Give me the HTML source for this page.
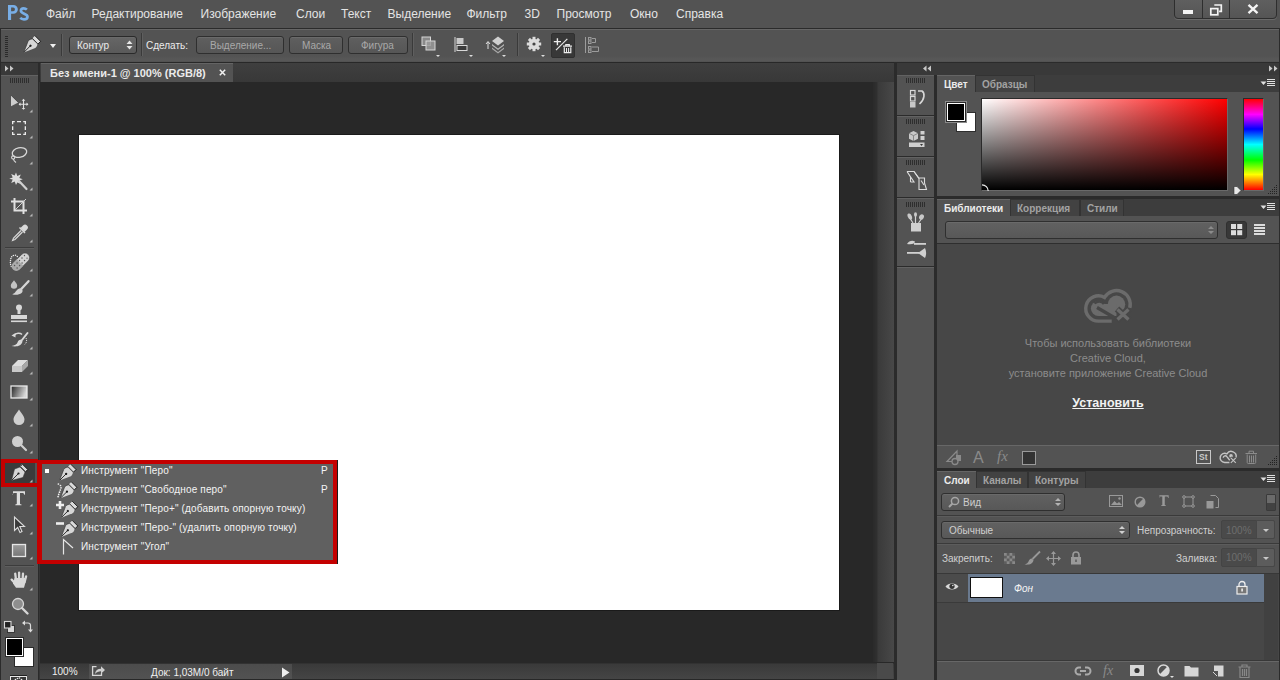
<!DOCTYPE html>
<html><head><meta charset="utf-8">
<style>
*{margin:0;padding:0;box-sizing:border-box}
html,body{width:1280px;height:680px;overflow:hidden;background:#535353;font-family:"Liberation Sans",sans-serif;}
body{position:relative}
.a{position:absolute}
.t{position:absolute;white-space:nowrap;line-height:1}
svg{position:absolute;overflow:visible}
.menu .t{font-size:12px;color:#e4e4e4;top:8px}
.tri{position:absolute;width:0;height:0;border-left:3px solid transparent;border-right:3px solid transparent;border-top:3px solid #e0e0e0}
.corner{position:absolute;width:0;height:0;border-left:3px solid transparent;border-bottom:3px solid #c8c8c8}
.grip{position:absolute;height:5px;background:repeating-linear-gradient(90deg,#2e2e2e 0 1px,transparent 1px 2px)}
.btn{position:absolute;border:1px solid #2f2f2f;border-radius:3px;background:linear-gradient(#5f5f5f,#565656);box-shadow:inset 0 1px 0 #6a6a6a}
</style></head>
<body>
<svg style="left:0;top:0" width="0" height="0"><defs>
<g id="penico">
 <path d="M-4 0.3h8v3.6h-8z" fill="#dadada"/>
 <path d="M-4.2 0.2h8.4 M4.2 0v4" stroke="#1e1e1e" stroke-width="0.9"/>
 <path d="M-3.9 4.1h7.8" stroke="#2a2a2a" stroke-width="0.8"/>
 <path d="M-3.8 4.6h7.6C5 6 5.4 7.5 5.2 9L0.3 20h-0.6L-5.2 9C-5.4 7.5-5 6-3.8 4.6z" fill="#d6d6d6"/>
 <path d="M-3.8 4.6C-5 6-5.4 7.5-5.2 9L-0.3 20" stroke="#2c2c2c" stroke-width="0.6" fill="none"/>
 <path d="M0 11V20" stroke="#1e1e1e" stroke-width="0.9"/>
 <circle cx="0" cy="10.8" r="1.2" fill="#1e1e1e"/>
</g>
</defs></svg>
<!-- MENU BAR -->
<div class="a menu" style="left:0;top:0;width:1280px;height:28px;background:#535353">
  <svg style="left:0;top:0" width="40" height="28" viewBox="0 0 40 28">
  <path d="M8 4.9H13.4A4.45 4.45 0 0 1 13.4 13.8H11.1V20H8Z M11.1 7.5H13.1A1.85 1.85 0 0 1 13.1 11.2H11.1Z" fill="#78aee6" fill-rule="evenodd"/>
  <path d="M26.9 9.6C26 8.7 24.8 8.3 23.7 8.3 21.8 8.3 20.9 9.4 20.9 10.8c0 3.3 6.6 2.6 6.6 5.9 0 1.8-1.6 2.6-3.6 2.6-1.5 0-2.8-0.5-3.7-1.4" stroke="#78aee6" stroke-width="2.7" fill="none"/>
</svg>
  <div class="t" style="left:46px">Файл</div>
  <div class="t" style="left:91.5px">Редактирование</div>
  <div class="t" style="left:200.5px">Изображение</div>
  <div class="t" style="left:296px">Слои</div>
  <div class="t" style="left:341px">Текст</div>
  <div class="t" style="left:387.5px">Выделение</div>
  <div class="t" style="left:466.5px">Фильтр</div>
  <div class="t" style="left:524.5px">3D</div>
  <div class="t" style="left:556.5px">Просмотр</div>
  <div class="t" style="left:630px">Окно</div>
  <div class="t" style="left:676px">Справка</div>
</div>

<!-- OPTIONS BAR -->
<div class="a" style="left:0;top:28px;width:1280px;height:35px;background:#2b2b2b"></div>
<div class="a" style="left:1px;top:29px;width:1278px;height:33px;background:linear-gradient(#535353 0,#535353 26px,#575757 29px,#575757 31px,#4e4e4e 32px);border-top:1px solid #666"></div>
<div class="grip" style="left:5px;top:36px;width:3px;height:21px;background:repeating-linear-gradient(180deg,#2a2a2a 0 1px,transparent 1px 2px)"></div>
<!-- pen icon -->
<svg style="left:0;top:0" width="1280" height="680" viewBox="0 0 1280 680">
 <use href="#penico" transform="translate(37.9 38.35) rotate(45) scale(0.97)"/>
</svg>
<div class="tri" style="left:50px;top:44px;border-width:4px 3px 0 3px;border-top-color:#f0f0f0"></div>
<div class="a" style="left:61px;top:34px;width:1px;height:22px;background:#3a3a3a;box-shadow:1px 0 0 #5f5f5f"></div>
<div class="btn" style="left:69px;top:36px;width:68px;height:18px;background:linear-gradient(#666,#5a5a5a);border-color:#2a2a2a"></div>
<div class="t" style="left:77px;top:41px;font-size:10px;color:#ececec">Контур</div>
<svg style="left:126px;top:39px" width="7" height="12" viewBox="0 0 7 12"><path d="M0.5 5L3.5 1.5 6.5 5z M0.5 7L3.5 10.5 6.5 7z" fill="#e6e6e6"/></svg>
<div class="a" style="left:141px;top:33px;width:1px;height:23px;background:#3a3a3a;box-shadow:1px 0 0 #5f5f5f"></div>
<div class="t" style="left:146px;top:41px;font-size:10px;color:#ececec">Сделать:</div>
<div class="btn" style="left:196px;top:36px;width:88px;height:18px"></div>
<div class="t" style="left:210px;top:41px;font-size:10px;color:#a9a9a9">Выделение...</div>
<div class="btn" style="left:289px;top:36px;width:54px;height:18px"></div>
<div class="t" style="left:302px;top:41px;font-size:10px;color:#a9a9a9">Маска</div>
<div class="btn" style="left:348px;top:36px;width:60px;height:18px"></div>
<div class="t" style="left:361px;top:41px;font-size:10px;color:#a9a9a9">Фигура</div>
<div class="a" style="left:412px;top:33px;width:1px;height:23px;background:#3a3a3a;box-shadow:1px 0 0 #5f5f5f"></div>
<!-- path ops -->
<svg style="left:421px;top:36px" width="16" height="16" viewBox="0 0 16 16">
  <rect x="1" y="1" width="8.5" height="8.5" fill="#8a8a8a" stroke="#d6d6d6" stroke-width="1"/>
  <rect x="5" y="5" width="9" height="9" fill="#9a9a9a" fill-opacity="0.85" stroke="#d6d6d6" stroke-width="1"/>
</svg>
<div class="tri" style="left:436px;top:55px;border-width:2px 2px 0 2px;border-top-color:#ddd"></div>
<!-- align -->
<svg style="left:454px;top:36px" width="16" height="17" viewBox="0 0 16 17">
  <rect x="0.5" y="1" width="1" height="15" fill="#d8d8d8"/>
  <rect x="2.5" y="2" width="7" height="6" fill="#c8c8c8"/>
  <rect x="3" y="9.5" width="10" height="5" fill="#3a3a3a" stroke="#d8d8d8" stroke-width="1"/>
</svg>
<div class="tri" style="left:469px;top:55px;border-width:2px 2px 0 2px;border-top-color:#ddd"></div>
<!-- arrange -->
<svg style="left:485px;top:36px" width="20" height="18" viewBox="0 0 20 18">
  <path d="M3 13V6 M1 8L3 5.5 5 8" stroke="#e0e0e0" stroke-width="1" fill="none"/>
  <path d="M13 0.5L19 5 13 9.5 7 5z" fill="#d0d0d0"/>
  <path d="M7 8l6 4.5 6-4.5 0 1.5-6 4.5-6-4.5z" fill="#b8b8b8"/>
  <path d="M7 11.5l6 4.5 6-4.5 0 1.5-6 4.5-6-4.5z" fill="#a8a8a8"/>
</svg>
<div class="tri" style="left:502px;top:55px;border-width:2px 2px 0 2px;border-top-color:#ddd"></div>
<div class="a" style="left:517px;top:33px;width:1px;height:23px;background:#3a3a3a;box-shadow:1px 0 0 #5f5f5f"></div>
<!-- gear -->
<svg style="left:526px;top:36px" width="16" height="16" viewBox="0 0 16 16">
  <g fill="#dcdcdc">
  <circle cx="8" cy="8" r="5.2"/>
  <rect x="6.5" y="0.8" width="3" height="14.4"/>
  <rect x="0.8" y="6.5" width="14.4" height="3"/>
  <rect x="6.5" y="0.8" width="3" height="14.4" transform="rotate(45 8 8)"/>
  <rect x="6.5" y="0.8" width="3" height="14.4" transform="rotate(-45 8 8)"/>
  </g>
  <circle cx="8" cy="8" r="1.6" fill="#444"/>
</svg>
<div class="tri" style="left:541px;top:55px;border-width:2px 2px 0 2px;border-top-color:#ddd"></div>
<div class="a" style="left:551px;top:33px;width:24px;height:25px;background:#383838;border-radius:2px;border:1px solid #303030"></div>
<svg style="left:550px;top:34px" width="26" height="22" viewBox="550 34 26 22">
  <path d="M553.8 41.6h7.2 M557.4 38.2v7" stroke="#ececec" stroke-width="1.4"/>
  <path d="M556 50.2L567.3 38.8" stroke="#e4e4e4" stroke-width="1.2"/>
  <path d="M563 46.2h9 M565.8 46v-1.4h3.5V46 M564.3 47.2v5.4h6.5v-5.4" stroke="#ececec" stroke-width="1.2" fill="none"/>
  <path d="M566.5 48v4 M568.6 48v4" stroke="#ececec" stroke-width="1"/>
</svg>
<svg style="left:582px;top:34px" width="20" height="22" viewBox="582 34 20 22">
  <g stroke="#9c9c9c" stroke-width="1" fill="none">
  <path d="M585.5 37v16"/>
  <rect x="588.5" y="37.5" width="2.5" height="2.5"/><rect x="588.5" y="41" width="2.5" height="2.5"/>
  <rect x="588.5" y="46.5" width="2.5" height="2.5"/><rect x="588.5" y="50" width="2.5" height="2.5"/>
  <path d="M592 38.5h3.5v4H592 M592 47h6.5v4.5H592"/>
  </g>
</svg>
<!-- window controls -->
<div class="a" style="left:1174px;top:-3px;width:103px;height:22px;border:1px solid #2e2e2e;border-radius:0 0 4px 4px;background:linear-gradient(#606060,#555);box-shadow:0 1px 0 #6a6a6a"></div>
<div class="a" style="left:1202px;top:0;width:1px;height:18px;background:#2e2e2e"></div>
<div class="a" style="left:1229px;top:0;width:1px;height:18px;background:#2e2e2e"></div>
<div class="a" style="left:1183px;top:10px;width:10px;height:4px;background:#f4f4f4"></div>
<svg style="left:1209px;top:4px" width="14" height="12" viewBox="0 0 14 12">
  <path d="M5.3 1h7v6.3h-2.2" stroke="#f4f4f4" stroke-width="1.7" fill="none"/>
  <rect x="1.8" y="4.6" width="7" height="6.2" stroke="#f4f4f4" stroke-width="1.7" fill="none"/>
</svg>
<svg style="left:1247px;top:4px" width="12" height="10" viewBox="0 0 12 10">
  <path d="M1.5 0.8L10.5 9.2 M10.5 0.8L1.5 9.2" stroke="#f4f4f4" stroke-width="2.3"/>
</svg>

<!-- LEFT STRIP + TOOLBAR -->
<div class="a" style="left:0;top:62px;width:40px;height:618px;background:#2b2b2b"></div>
<div class="a" style="left:1px;top:63px;width:37px;height:12px;background:#393939"></div>
<svg style="left:5px;top:65px" width="10" height="7" viewBox="0 0 10 7"><path d="M0 0.5L3.5 3.5 0 6.5z M5 0.5L8.5 3.5 5 6.5z" fill="#c8c8c8"/></svg>
<div class="a" style="left:1px;top:75px;width:37px;height:605px;background:#535353;border-top:1px solid #626262"></div>
<div class="grip" style="left:10px;top:78px;width:19px"></div>
<!-- DOCUMENT AREA -->
<div class="a" style="left:39px;top:82px;width:1px;height:598px;background:#363636"></div>
<div class="a" style="left:40px;top:62px;width:854px;height:618px;background:#282828"></div>
<div class="a" style="left:40px;top:63px;width:854px;height:19px;background:linear-gradient(#3f3f3f,#383838)"></div>
<div class="a" style="left:41px;top:63px;width:192px;height:19px;background:#535353;border-top:1px solid #646464"></div>
<div class="t" style="left:50px;top:68px;font-size:11px;font-weight:bold;color:#ebebeb">Без имени-1 @ 100% (RGB/8)</div>
<svg style="left:219px;top:69px" width="7" height="7" viewBox="0 0 7 7"><path d="M0.8 0.8L6.2 6.2 M6.2 0.8L0.8 6.2" stroke="#f0f0f0" stroke-width="1.5"/></svg>
<div class="a" style="left:873px;top:82px;width:21px;height:580px;background:linear-gradient(90deg,#2a2a2a 0,#303030 4px,#3a3a3a 5px,#484848 100%)"></div>
<div class="a" style="left:78px;top:134px;width:762px;height:477px;background:#fff;border:1px solid #1a1a1a"></div>
<!-- status bar -->
<div class="a" style="left:40px;top:663px;width:854px;height:16px;background:linear-gradient(#3a3a3a,#454545);border-top:1px solid #323232"></div>
<div class="t" style="left:52px;top:667px;font-size:10px;color:#f0f0f0">100%</div>
<div class="a" style="left:89px;top:664px;width:203px;height:15px;background:linear-gradient(#4c4c4c,#525252)"></div>
<svg style="left:91px;top:665px" width="15" height="12" viewBox="0 0 15 12">
  <path d="M5.5 1.6H1.6V10.4H10.5V8" stroke="#d6d6d6" stroke-width="1.3" fill="none"/>
  <path d="M4 9c0.3-3.5 2.6-5.2 6-5.2V1.2l4 3.8-4 3.8V6.3C7.6 6.3 5.6 7.2 4 9z" fill="#cfcfcf"/>
</svg>
<div class="t" style="left:151px;top:667.5px;font-size:10px;color:#f0f0f0">Док: 1,03M/0 байт</div>
<div class="a" style="left:877px;top:663px;width:16px;height:16px;background:#4a4a4a"></div>
<svg style="left:281px;top:667px" width="9" height="11" viewBox="0 0 9 11"><path d="M1 0.5L8.5 5.5 1 10.5z" fill="#eee"/></svg>
<!-- RIGHT DOCK -->
<div class="a" style="left:894px;top:62px;width:386px;height:618px;background:#2b2b2b"></div>
<div class="a" style="left:897px;top:63px;width:382px;height:12px;background:#393939"></div>
<svg style="left:923px;top:65px" width="8" height="7" viewBox="0 0 8 7"><path d="M3.5 0.5L0 3.5 3.5 6.5z M8 0.5L4.5 3.5 8 6.5z" fill="#c8c8c8"/></svg>
<svg style="left:1269px;top:65px" width="10" height="7" viewBox="0 0 10 7"><path d="M0 0.5L3.5 3.5 0 6.5z M5 0.5L8.5 3.5 5 6.5z" fill="#c8c8c8"/></svg>
<div class="a" style="left:897px;top:75px;width:37px;height:40px;background:#535353;border-top:1px solid #626262"></div>
<div class="a" style="left:897px;top:116px;width:37px;height:40px;background:#535353;border-top:1px solid #626262"></div>
<div class="a" style="left:897px;top:157px;width:37px;height:40px;background:#535353;border-top:1px solid #626262"></div>
<div class="a" style="left:897px;top:198px;width:37px;height:68px;background:#535353;border-top:1px solid #626262"></div>
<div class="a" style="left:897px;top:267px;width:37px;height:413px;background:#535353;border-top:1px solid #626262"></div>
<div class="grip" style="left:906px;top:78px;width:19px"></div>
<div class="grip" style="left:906px;top:119px;width:19px"></div>
<div class="grip" style="left:906px;top:160px;width:19px"></div>
<div class="grip" style="left:906px;top:202px;width:19px"></div>
<!-- COLOR PANEL -->
<div class="a" style="left:937px;top:75px;width:342px;height:121px;background:#535353"></div>
<div class="a" style="left:937px;top:75px;width:342px;height:17px;background:#3d3d3d"></div>
<div class="a" style="left:937px;top:75px;width:38px;height:17px;background:#535353;border-top:1px solid #656565"></div>
<div class="a" style="left:975px;top:75px;width:60px;height:17px;background:#424242;border:1px solid #333;border-bottom:none"></div>
<div class="t" style="left:944px;top:80px;font-size:10px;font-weight:bold;color:#ececec">Цвет</div>
<div class="t" style="left:982px;top:80px;font-size:10px;font-weight:bold;color:#a2a2a2">Образцы</div>
<!-- LIBRARIES PANEL -->
<div class="a" style="left:937px;top:199px;width:342px;height:269px;background:#535353"></div>
<div class="a" style="left:937px;top:199px;width:342px;height:17px;background:#3d3d3d"></div>
<div class="a" style="left:937px;top:199px;width:73px;height:17px;background:#535353;border-top:1px solid #656565"></div>
<div class="a" style="left:1010px;top:199px;width:70px;height:17px;background:#424242;border:1px solid #333;border-bottom:none"></div>
<div class="a" style="left:1080px;top:199px;width:44px;height:17px;background:#424242;border:1px solid #333;border-bottom:none"></div>
<div class="t" style="left:944px;top:204px;font-size:10px;font-weight:bold;color:#ececec">Библиотеки</div>
<div class="t" style="left:1017px;top:204px;font-size:10px;font-weight:bold;color:#a2a2a2">Коррекция</div>
<div class="t" style="left:1087px;top:204px;font-size:10px;font-weight:bold;color:#a2a2a2">Стили</div>
<div class="a" style="left:937px;top:243px;width:342px;height:202px;background:#474747;border-top:1px solid #2e2e2e"></div>
<!-- LAYERS PANEL -->
<div class="a" style="left:937px;top:471px;width:342px;height:209px;background:#535353"></div>
<div class="a" style="left:937px;top:471px;width:342px;height:17px;background:#3d3d3d"></div>
<div class="a" style="left:937px;top:471px;width:39px;height:17px;background:#535353;border-top:1px solid #656565"></div>
<div class="a" style="left:976px;top:471px;width:52px;height:17px;background:#424242;border:1px solid #333;border-bottom:none"></div>
<div class="a" style="left:1028px;top:471px;width:58px;height:17px;background:#424242;border:1px solid #333;border-bottom:none"></div>
<div class="t" style="left:944px;top:476px;font-size:10px;font-weight:bold;color:#ececec">Слои</div>
<div class="t" style="left:983px;top:476px;font-size:10px;font-weight:bold;color:#a2a2a2">Каналы</div>
<div class="t" style="left:1035px;top:476px;font-size:10px;font-weight:bold;color:#a2a2a2">Контуры</div>

<!-- color panel content -->
<svg style="left:1260px;top:203px" width="16" height="9" viewBox="0 0 16 9"><path d="M0.5 2.5h6L3.5 6z" fill="#e0e0e0"/><path d="M7 0.5h8 M7 2.5h8 M7 4.5h8 M7 6.5h8" stroke="#e0e0e0" stroke-width="1"/></svg>
<svg style="left:1260px;top:79px" width="16" height="9" viewBox="0 0 16 9"><path d="M0.5 2.5h6L3.5 6z" fill="#e0e0e0"/><path d="M7 0.5h8 M7 2.5h8 M7 4.5h8 M7 6.5h8" stroke="#e0e0e0" stroke-width="1"/></svg>
<svg style="left:1260px;top:475px" width="16" height="9" viewBox="0 0 16 9"><path d="M0.5 2.5h6L3.5 6z" fill="#e0e0e0"/><path d="M7 0.5h8 M7 2.5h8 M7 4.5h8 M7 6.5h8" stroke="#e0e0e0" stroke-width="1"/></svg>
<div class="a" style="left:956px;top:112px;width:20px;height:20px;background:#fff;border:1px solid #2e2e2e"></div>
<div class="a" style="left:945px;top:101px;width:22px;height:22px;background:#000;border:1px solid #8a8a8a;box-shadow:inset 0 0 0 1px #2a2a2a,inset 0 0 0 2px #fff"></div>
<div class="a" style="left:981px;top:98px;width:247px;height:93px;border:1px solid #6a6a6a;border-top-color:#2a2a2a;border-left-color:#2a2a2a;background:linear-gradient(to bottom,rgba(0,0,0,0),#000),linear-gradient(to right,#fff,#f00)"></div>
<svg style="left:982px;top:184px" width="8" height="8" viewBox="0 0 8 8"><path d="M0 0.8a6.2 6.2 0 0 1 6.2 6.2" stroke="#eee" stroke-width="1.2" fill="none"/></svg>
<div class="a" style="left:1243px;top:98px;width:21px;height:93px;border:1px solid #6a6a6a;border-top-color:#2a2a2a;border-left-color:#2a2a2a;background:linear-gradient(to bottom,#f00 0%,#f0f 17%,#00f 33%,#0ff 50%,#0f0 67%,#ff0 83%,#f00 100%)"></div>
<svg style="left:1233px;top:186px" width="9" height="9" viewBox="0 0 9 9"><path d="M1 0.5h3l4 4 -4 4H1z" fill="#e8e8e8" stroke="#333" stroke-width="0.6"/></svg>
<svg style="left:1267px;top:184px" width="11" height="11" viewBox="0 0 11 11"><g fill="#222"><rect x="9" y="1" width="1" height="1"/><rect x="7" y="3" width="1" height="1"/><rect x="9" y="3" width="1" height="1"/><rect x="5" y="5" width="1" height="1"/><rect x="7" y="5" width="1" height="1"/><rect x="9" y="5" width="1" height="1"/><rect x="3" y="7" width="1" height="1"/><rect x="5" y="7" width="1" height="1"/><rect x="7" y="7" width="1" height="1"/><rect x="9" y="7" width="1" height="1"/><rect x="1" y="9" width="1" height="1"/><rect x="3" y="9" width="1" height="1"/><rect x="5" y="9" width="1" height="1"/><rect x="7" y="9" width="1" height="1"/><rect x="9" y="9" width="1" height="1"/></g></svg>
<!-- libraries content -->
<div class="btn" style="left:945px;top:221px;width:273px;height:18px;background:linear-gradient(#616161,#585858)"></div>
<svg style="left:1207px;top:224px" width="8" height="12" viewBox="0 0 8 12"><path d="M1 5L4 2 7 5z M1 7L4 10 7 7z" fill="#8c8c8c"/></svg>
<div class="a" style="left:1226px;top:221px;width:21px;height:18px;background:#383838;border-radius:3px;border:1px solid #303030"></div>
<svg style="left:1231px;top:224px" width="12" height="12" viewBox="0 0 12 12"><g fill="#dcdcdc"><rect x="0" y="0" width="5" height="5"/><rect x="6.2" y="0" width="5" height="5"/><rect x="0" y="6.2" width="5" height="5"/><rect x="6.2" y="6.2" width="5" height="5"/></g></svg>
<svg style="left:1254px;top:224px" width="12" height="12" viewBox="0 0 12 12"><g fill="#dcdcdc"><rect x="0" y="0" width="11" height="2"/><rect x="0" y="3" width="11" height="2"/><rect x="0" y="6" width="11" height="2"/><rect x="0" y="9" width="11" height="2"/></g></svg>
<svg style="left:1084px;top:288px" width="50" height="37" viewBox="0 0 50 37">
 <path d="M27.7 33.1H14.5A12.65 12.65 0 1 1 20.56 9.4A13.8 13.8 0 0 1 45.8 19.9" fill="none" stroke="#6b6b6b" stroke-width="3.4"/>
 <circle cx="14.5" cy="20.5" r="7.6" fill="#6b6b6b"/>
 <circle cx="32.5" cy="16.3" r="8.7" fill="#6b6b6b"/>
 <rect x="14.5" y="16" width="18" height="12" fill="#6b6b6b"/>
 <path d="M13 19.5L31 30" stroke="#474747" stroke-width="3.2"/>
 <path d="M10.5 15.5a6 6 0 0 1 9.5 0.5" stroke="#474747" stroke-width="2.6" fill="none"/>
 <path d="M33 21l12 11 M45 21l-12 11" stroke="#474747" stroke-width="6.5"/>
 <path d="M33.5 21.5l11 10 M44.5 21.5l-11 10" stroke="#6b6b6b" stroke-width="3.3"/>
</svg>
<div class="t" style="left:937px;top:338px;width:342px;text-align:center;font-size:11px;color:#8c8c8c">Чтобы использовать библиотеки</div>
<div class="t" style="left:937px;top:353px;width:342px;text-align:center;font-size:11px;color:#8c8c8c">Creative Cloud,</div>
<div class="t" style="left:937px;top:368px;width:342px;text-align:center;font-size:11px;color:#8c8c8c">установите приложение Creative Cloud</div>
<div class="t" style="left:937px;top:397px;width:342px;text-align:center;font-size:12.5px;font-weight:bold;color:#f2f2f2;text-decoration:underline">Установить</div>
<!-- libraries footer -->
<div class="a" style="left:937px;top:445px;width:342px;height:23px;background:#535353;border-top:1px solid #676767"></div>

<!-- libraries footer icons -->
<svg style="left:946px;top:449px" width="18" height="16" viewBox="0 0 18 16">
  <path d="M1 12.5L11 2v10.5z" stroke="#8a8a8a" stroke-width="1.2" fill="none"/>
  <rect x="10" y="6" width="5" height="6" fill="#8a8a8a"/>
  <circle cx="9" cy="12.5" r="3" fill="#535353" stroke="#8a8a8a" stroke-width="1.3"/>
</svg>
<div class="t" style="left:973px;top:450px;font-size:16px;color:#8a8a8a">A</div>
<div class="t" style="left:997px;top:449px;font-size:15px;font-style:italic;color:#8a8a8a;font-family:'Liberation Serif',serif">fx</div>
<div class="a" style="left:1022px;top:451px;width:14px;height:14px;background:#333;border:1px solid #9a9a9a"></div>
<div class="a" style="left:1196px;top:450px;width:15px;height:14px;border:1px solid #c8c8c8"></div>
<div class="t" style="left:1199px;top:453px;font-size:8.5px;font-weight:bold;color:#c8c8c8">St</div>
<svg style="left:1180px;top:440px" width="100" height="30" viewBox="1180 440 100 30">
 <g transform="translate(1219.5 450.5) scale(0.36)">
  <path d="M27.7 33.1H14.5A12.65 12.65 0 1 1 20.56 9.4A13.8 13.8 0 0 1 45.8 19.9" fill="none" stroke="#c4c4c4" stroke-width="4"/>
  <path d="M10.5 20a5.5 5.5 0 0 1 10-3l8 10" stroke="#c4c4c4" stroke-width="4" fill="none"/>
  <circle cx="32" cy="15" r="5" fill="#c4c4c4"/>
 </g>
 <path d="M1230.5 457.5l5.5 5.5 M1236 457.5l-5.5 5.5" stroke="#535353" stroke-width="3"/>
 <path d="M1230.8 457.8l5 5 M1235.8 457.8l-5 5" stroke="#c4c4c4" stroke-width="1.1"/>
 <g stroke="#8c8c8c" stroke-width="1" fill="none">
  <path d="M1245.5 453.5h11.5 M1249 453V451.2h4.5V453 M1247.2 454.5v8c0 0.6 0.4 1 1 1h6.5c0.6 0 1-0.4 1-1v-8 M1249.5 455.5v7 M1251.5 455.5v7 M1253.5 455.5v7"/>
 </g>
</svg>
<svg style="left:1267px;top:455px" width="11" height="11" viewBox="0 0 11 11"><g fill="#222"><rect x="9" y="1" width="1" height="1"/><rect x="7" y="3" width="1" height="1"/><rect x="9" y="3" width="1" height="1"/><rect x="5" y="5" width="1" height="1"/><rect x="7" y="5" width="1" height="1"/><rect x="9" y="5" width="1" height="1"/><rect x="3" y="7" width="1" height="1"/><rect x="5" y="7" width="1" height="1"/><rect x="7" y="7" width="1" height="1"/><rect x="9" y="7" width="1" height="1"/><rect x="1" y="9" width="1" height="1"/><rect x="3" y="9" width="1" height="1"/><rect x="5" y="9" width="1" height="1"/><rect x="7" y="9" width="1" height="1"/><rect x="9" y="9" width="1" height="1"/></g></svg>
<!-- layers content -->
<div class="btn" style="left:941px;top:493px;width:124px;height:18px;background:linear-gradient(#616161,#585858)"></div>
<svg style="left:948px;top:496px" width="12" height="12" viewBox="0 0 12 12"><circle cx="7" cy="5" r="3.6" stroke="#a6a6a6" stroke-width="1.5" fill="none"/><path d="M4.5 7.5L1 11" stroke="#a6a6a6" stroke-width="2"/></svg>
<div class="t" style="left:963px;top:498px;font-size:10px;color:#cdcdcd">Вид</div>
<svg style="left:1054px;top:496px" width="8" height="12" viewBox="0 0 8 12"><path d="M1 5L4 2 7 5z M1 7L4 10 7 7z" fill="#b4b4b4"/></svg>
<svg style="left:1109px;top:495px" width="15" height="13" viewBox="0 0 15 13"><rect x="0.5" y="0.5" width="13" height="11" stroke="#999" stroke-width="1" fill="none"/><path d="M2 10l3.5-4 2.5 2.5 2-1.5 3 3z" fill="#999"/><circle cx="10.5" cy="3.5" r="1.2" fill="#999"/></svg>
<svg style="left:1134px;top:496px" width="12" height="12" viewBox="0 0 12 12"><circle cx="6" cy="6" r="4.8" stroke="#999" stroke-width="1.4" fill="#535353"/><path d="M9.4 2.6A4.8 4.8 0 0 1 2.6 9.4z" fill="#999"/></svg>
<svg style="left:1158px;top:495px" width="12" height="11" viewBox="13 491 12 14.2"><path d="M13 491.2h12v3.6h-0.7c-0.3-1.4-0.8-1.9-2-1.9h-2.3v10.6c0 0.6 0.3 0.8 1.5 0.9v0.9h-6.2v-0.9c1.2-0.1 1.5-0.3 1.5-0.9V492.9h-2.3c-1.2 0-1.7 0.5-2 1.9H13z" fill="#9a9a9a"/></svg>
<svg style="left:1182px;top:495px" width="13" height="13" viewBox="0 0 13 13"><rect x="2" y="2" width="9" height="9" stroke="#999" stroke-width="1" fill="none"/><g fill="#535353" stroke="#999" stroke-width="1"><circle cx="2" cy="2" r="1.3"/><circle cx="11" cy="2" r="1.3"/><circle cx="2" cy="11" r="1.3"/><circle cx="11" cy="11" r="1.3"/></g></svg>
<svg style="left:1206px;top:495px" width="13" height="14" viewBox="0 0 13 14"><path d="M4.5 0.5h5l3 3v9h-3" stroke="#999" stroke-width="1" fill="none"/><rect x="0.5" y="6" width="7" height="7.5" fill="#999"/></svg>
<div class="a" style="left:1266px;top:494px;width:10px;height:17px;background:linear-gradient(#6a6a6a 0 50%,#424242 50%);border:1px solid #3a3a3a;border-radius:1px"></div>
<div class="a" style="left:937px;top:515px;width:342px;height:1px;background:#3a3a3a;box-shadow:0 1px 0 #5c5c5c"></div>
<div class="btn" style="left:941px;top:521px;width:189px;height:18px;background:linear-gradient(#616161,#585858)"></div>
<div class="t" style="left:949px;top:526px;font-size:10px;color:#d0d0d0">Обычные</div>
<svg style="left:1118px;top:524px" width="8" height="12" viewBox="0 0 8 12"><path d="M1 5L4 2 7 5z M1 7L4 10 7 7z" fill="#d0d0d0"/></svg>
<div class="t" style="left:1137px;top:526px;font-size:10px;color:#d0d0d0">Непрозрачность:</div>
<div class="a" style="left:1221px;top:520px;width:54px;height:19px;background:#4a4a4a;border:1px solid #444;border-radius:2px"></div>
<div class="a" style="left:1256px;top:520px;width:19px;height:19px;background:#5c5c5c;border-radius:0 2px 2px 0;border:1px solid #474747"></div>
<div class="t" style="left:1226px;top:526px;font-size:10px;color:#6e6e6e">100%</div>
<div class="tri" style="left:1263px;top:529px;border-width:3px 3px 0 3px;border-top-color:#c8c8c8"></div>
<div class="a" style="left:937px;top:543px;width:342px;height:1px;background:#3a3a3a;box-shadow:0 1px 0 #5c5c5c"></div>
<div class="t" style="left:942px;top:554px;font-size:10px;color:#d0d0d0">Закрепить:</div>
<svg style="left:1004px;top:553px" width="11" height="11" viewBox="0 0 11 11"><rect x="0" y="0" width="11" height="11" fill="#888"/><g fill="#5e5e5e"><rect x="2.75" y="0" width="2.75" height="2.75"/><rect x="8.25" y="0" width="2.75" height="2.75"/><rect x="0" y="2.75" width="2.75" height="2.75"/><rect x="5.5" y="2.75" width="2.75" height="2.75"/><rect x="2.75" y="5.5" width="2.75" height="2.75"/><rect x="8.25" y="5.5" width="2.75" height="2.75"/><rect x="0" y="8.25" width="2.75" height="2.75"/><rect x="5.5" y="8.25" width="2.75" height="2.75"/></g></svg>
<svg style="left:1024px;top:551px" width="17" height="14" viewBox="0 0 17 14"><path d="M16 0.5L8.5 8" stroke="#999" stroke-width="1.8"/><path d="M8 7.5c-2 0-3 1.5-3.5 3S2 13 0.5 13.5C4 14 9 13.5 9.5 9z" fill="#999"/></svg>
<svg style="left:1046px;top:551px" width="15" height="15" viewBox="0 0 15 15"><path d="M7.5 1v13 M1 7.5h13" stroke="#999" stroke-width="1.2"/><path d="M7.5 0L5 3h5z M7.5 15L5 12h5z M0 7.5L3 5v5z M15 7.5L12 5v5z" fill="#999"/></svg>
<svg style="left:1070px;top:551px" width="12" height="14" viewBox="0 0 12 14"><path d="M3 6V4a3 3 0 0 1 6 0v2" stroke="#999" stroke-width="1.6" fill="none"/><rect x="1" y="6" width="10" height="7.5" fill="#999"/><rect x="5.3" y="8.5" width="1.4" height="2.5" fill="#535353"/></svg>
<div class="t" style="left:1176px;top:554px;font-size:10px;color:#d0d0d0">Заливка:</div>
<div class="a" style="left:1221px;top:548px;width:54px;height:19px;background:#4a4a4a;border:1px solid #444;border-radius:2px"></div>
<div class="a" style="left:1256px;top:548px;width:19px;height:19px;background:#5c5c5c;border-radius:0 2px 2px 0;border:1px solid #474747"></div>
<div class="t" style="left:1226px;top:553px;font-size:10px;color:#6e6e6e">100%</div>
<div class="tri" style="left:1263px;top:557px;border-width:3px 3px 0 3px;border-top-color:#c8c8c8"></div>
<!-- layer list -->
<div class="a" style="left:937px;top:573px;width:342px;height:88px;background:#474747;border-top:1px solid #383838"></div>
<div class="a" style="left:1264px;top:574px;width:14px;height:87px;background:#414141"></div>
<div class="a" style="left:937px;top:574px;width:31px;height:28px;background:#4b4b4b"></div>
<div class="a" style="left:968px;top:574px;width:296px;height:28px;background:#6a7a8f"></div>
<div class="a" style="left:937px;top:602px;width:327px;height:1px;background:#3a3a3a"></div>
<svg style="left:945px;top:581px" width="14" height="11" viewBox="0 0 14 11"><path d="M0.5 5.5C3 1.5 11 1.5 13.5 5.5 11 9.5 3 9.5 0.5 5.5z" fill="#d8d8d8"/><circle cx="7" cy="5.3" r="2.6" fill="#333"/><circle cx="7.8" cy="4.5" r="0.8" fill="#ddd"/></svg>
<div class="a" style="left:970px;top:577px;width:33px;height:21px;background:#fff;border:1px solid #111"></div>
<div class="t" style="left:1014px;top:584px;font-size:10px;font-style:italic;color:#f4f4f4">Фон</div>
<svg style="left:1236px;top:580px" width="12" height="15" viewBox="0 0 12 15"><path d="M3 6.5V4.5a3 3 0 0 1 6 0v2" stroke="#eee" stroke-width="1.3" fill="none"/><rect x="1" y="6.5" width="10" height="7.5" fill="#777" stroke="#eee" stroke-width="1.2"/><rect x="5.3" y="8.5" width="1.6" height="3" fill="#eee"/></svg>
<!-- layers footer -->
<div class="a" style="left:937px;top:661px;width:342px;height:19px;background:#535353;border-top:1px solid #676767"></div>
<div class="a" style="left:937px;top:660px;width:342px;height:1px;background:#383838"></div>
<svg style="left:1075px;top:666px" width="16" height="10" viewBox="0 0 16 10"><g stroke="#aaa" stroke-width="2" fill="none"><path d="M6 1.5H4a3.5 3.5 0 0 0 0 7h2 M10 1.5h2a3.5 3.5 0 0 1 0 7h-2 M5 5h6"/></g></svg>
<div class="t" style="left:1103px;top:664px;font-size:14px;font-style:italic;color:#8a8a8a;font-family:'Liberation Serif',serif">fx</div>
<svg style="left:1130px;top:665px" width="15" height="12" viewBox="0 0 15 12"><rect x="0" y="0" width="14" height="11" fill="#d6d6d6"/><circle cx="7" cy="5.5" r="2.6" fill="#333"/></svg>
<svg style="left:1157px;top:664px" width="18" height="14" viewBox="0 0 18 14"><circle cx="6.5" cy="6.5" r="5.5" stroke="#d8d8d8" stroke-width="1.5" fill="#535353"/><path d="M10.4 2.6A5.5 5.5 0 0 1 2.6 10.4z" fill="#d8d8d8"/><path d="M13 12h4l-2 2z" fill="#e0e0e0"/></svg>
<svg style="left:1184px;top:665px" width="15" height="12" viewBox="0 0 15 12"><path d="M0.5 1h5l1.5 1.5h7.5v9H0.5z" fill="#d6d6d6"/></svg>
<svg style="left:1212px;top:665px" width="12" height="12" viewBox="0 0 12 12"><path d="M2 0.5h9.5v11H6V6H2z" fill="#d6d6d6"/><path d="M1 7l4 4" stroke="#d6d6d6" stroke-width="1"/></svg>
<svg style="left:1238px;top:664px" width="13" height="14" viewBox="0 0 13 14"><g stroke="#888" stroke-width="1.2" fill="none"><path d="M0.5 3h12 M4 2.5V1h5v1.5 M2 3.5v10h9v-10 M4.5 5v7 M6.5 5v7 M8.5 5v7"/></g></svg>
<!-- TOOL ICONS -->
<svg style="left:29px;top:109px" width="4" height="4" viewBox="0 0 4 4"><path d="M3.5 0.5V3.5H0.5z" fill="#b8b8b8"/></svg>
<svg style="left:0;top:90px" width="40" height="50" viewBox="0 90 40 50">
 <path d="M11 95.2L18.3 102.4 11 106.2z" fill="#cdcdcd"/>
 <path d="M11 95.2L18.3 102.4" stroke="#2a2a2a" stroke-width="0.6"/>
 <path d="M23.5 100v8.6 M19.6 104.3h7.8" stroke="#e2e2e2" stroke-width="1.1"/>
 <path d="M23.5 98.8l-1.8 1.9h3.6z M23.5 109.8l-1.8-1.9h3.6z M18.6 104.3l1.9-1.8v3.6z M28.4 104.3l-1.9-1.8v3.6z" fill="#e2e2e2"/>
 <g stroke="#ececec" stroke-width="1.3" fill="none">
 <path d="M12.65 124.2V121.65H14.8 M17 121.65H21 M23.2 121.65H25.35V124.2 M25.35 126.2V130 M25.35 132V134.35H23.2 M21 134.35H17 M14.8 134.35H12.65V132 M12.65 130V126.2"/>
 </g>
</svg>
<svg style="left:29px;top:135px" width="4" height="4" viewBox="0 0 4 4"><path d="M3.5 0.5V3.5H0.5z" fill="#b8b8b8"/></svg>
<svg style="left:10px;top:146px" width="18" height="18" viewBox="0 0 18 18">
 <ellipse cx="9.5" cy="6.5" rx="7.3" ry="4.8" fill="none" stroke="#d8d8d8" stroke-width="1.3" transform="rotate(-12 9.5 6.5)"/>
 <circle cx="3.2" cy="11.5" r="1.6" fill="none" stroke="#d8d8d8" stroke-width="1.1"/>
 <path d="M3.5 13c0 1.5 1 2.5 2.5 3.5" stroke="#d8d8d8" stroke-width="1.1" fill="none"/>
</svg>
<svg style="left:29px;top:161px" width="4" height="4" viewBox="0 0 4 4"><path d="M3.5 0.5V3.5H0.5z" fill="#b8b8b8"/></svg>
<svg style="left:9px;top:172px" width="20" height="19" viewBox="0 0 20 19">
 <path d="M7 0.5l1.3 3.5 3.5-1.5-1.5 3.5 3.5 1.3-3.5 1.3 1.5 3.5-3.5-1.5L7 13l-1.3-3.5-3.5 1.5 1.5-3.5L0.2 6.8l3.5-1.3L2.2 2l3.5 1.5z" fill="#dcdcdc"/>
 <path d="M10 9l7.5 8" stroke="#d0d0d0" stroke-width="2.2" stroke-linecap="round"/>
</svg>
<svg style="left:29px;top:187px" width="4" height="4" viewBox="0 0 4 4"><path d="M3.5 0.5V3.5H0.5z" fill="#b8b8b8"/></svg>
<svg style="left:10px;top:197px" width="18" height="18" viewBox="0 0 18 18">
 <path d="M4.5 1v12.5H17 M1 4.5h12.5V17" stroke="#e0e0e0" stroke-width="2" fill="none"/>
 <path d="M5 13L16 2" stroke="#d0d0d0" stroke-width="1"/>
</svg>
<svg style="left:29px;top:213px" width="4" height="4" viewBox="0 0 4 4"><path d="M3.5 0.5V3.5H0.5z" fill="#b8b8b8"/></svg>
<svg style="left:11px;top:224px" width="18" height="18" viewBox="0 0 18 18">
 <path d="M12 1.5a2.6 2.6 0 0 1 4 4l-2.5 2.5-4-4z" fill="#d8d8d8"/>
 <path d="M8.5 3.5l5.5 5.5" stroke="#d8d8d8" stroke-width="1.5"/>
 <path d="M10 6.5L2.5 14 1.5 16.5 4 15.5 11.5 8" stroke="#d8d8d8" stroke-width="1.1" fill="#666"/>
</svg>
<svg style="left:29px;top:239px" width="4" height="4" viewBox="0 0 4 4"><path d="M3.5 0.5V3.5H0.5z" fill="#b8b8b8"/></svg>
<div class="a" style="left:5px;top:247px;width:29px;height:1px;background:#3c3c3c;box-shadow:0 1px 0 #5e5e5e"></div>
<svg style="left:0;top:250px" width="40" height="50" viewBox="0 250 40 50">
 <g fill="#ececec"><circle cx="11.3" cy="266.6" r="0.75"/><circle cx="10.6" cy="264.5" r="0.75"/><circle cx="10.4" cy="262.5" r="0.75"/><circle cx="10.5" cy="260.5" r="0.75"/><circle cx="10.9" cy="258.5" r="0.75"/><circle cx="11.7" cy="256.7" r="0.75"/><circle cx="13.4" cy="255.4" r="0.75"/><circle cx="15.5" cy="255.3" r="0.75"/><circle cx="17.3" cy="256.6" r="0.75"/></g>
 <g transform="translate(20.8 261.8) rotate(-45)">
  <rect x="-10.5" y="-4.6" width="21" height="9.2" rx="4.6" fill="#d2d2d2" stroke="#3a3a3a" stroke-width="0.5"/>
  <path d="M-5.9 -4.6h-0.5a4.6 4.6 0 0 0 0 9.2h0.5z M-10 -4.6" fill="#a9a9a9"/>
  <rect x="-6" y="-4.6" width="5" height="9.2" fill="#a9a9a9"/>
  <g fill="#555"><circle cx="-7" cy="-1.8" r="0.7"/><circle cx="-7" cy="1.8" r="0.7"/><circle cx="-3.5" cy="-1.8" r="0.7"/><circle cx="-3.5" cy="1.8" r="0.7"/><circle cx="0" cy="-1.8" r="0.7"/><circle cx="0" cy="1.8" r="0.7"/><circle cx="3.5" cy="-1.8" r="0.7"/><circle cx="3.5" cy="1.8" r="0.7"/><circle cx="7" cy="-1.8" r="0.7"/><circle cx="7" cy="1.8" r="0.7"/></g>
 </g>
 <path d="M14 280.3c1.4 2 3.2 3.6 3.2 5.3a3.2 3.2 0 0 1-6.4 0c0-1.7 1.8-3.3 3.2-5.3z" fill="#c4c4c4"/>
 <path d="M28.5 281.2L21.5 288.8" stroke="#d6d6d6" stroke-width="2.3" stroke-linecap="round"/>
 <path d="M21.3 288.2c-3 0.2-4.5 1.6-5.6 3.4-0.8 1.3-2 2.3-3.5 2.7 2.5 0.8 7 0.9 9.4-1.2 1.4-1.3 1.4-3.3-0.3-4.9z" fill="#d2d2d2"/>
</svg>
<svg style="left:29px;top:268px" width="4" height="4" viewBox="0 0 4 4"><path d="M3.5 0.5V3.5H0.5z" fill="#b8b8b8"/></svg>

<svg style="left:29px;top:293px" width="4" height="4" viewBox="0 0 4 4"><path d="M3.5 0.5V3.5H0.5z" fill="#b8b8b8"/></svg>
<svg style="left:10px;top:304px" width="18" height="19" viewBox="0 0 18 19">
 <circle cx="9" cy="3.5" r="3" fill="#d8d8d8"/>
 <path d="M7.5 5h3v5h-3z" fill="#d8d8d8"/>
 <path d="M1 11h16v4H1z" fill="#d8d8d8"/>
 <rect x="1" y="16.5" width="16" height="1.6" fill="#d8d8d8"/>
</svg>
<svg style="left:29px;top:319px" width="4" height="4" viewBox="0 0 4 4"><path d="M3.5 0.5V3.5H0.5z" fill="#b8b8b8"/></svg>
<svg style="left:10px;top:331px" width="19" height="18" viewBox="0 0 19 18">
 <path d="M4 4.5c2-2.5 6-3 8-1" stroke="#d8d8d8" stroke-width="1.4" fill="none"/>
 <path d="M1.5 4.5l4-2.5 0 4.5z" fill="#d8d8d8"/>
 <path d="M17.5 2L12 9" stroke="#d8d8d8" stroke-width="2" stroke-linecap="round"/>
 <path d="M11.5 8.5c-2 0-3.5 1-4 3S4.5 14.5 1.5 15c4 1 10.5 0.5 11-5z" fill="#d8d8d8"/>
 <path d="M16 7c1 2 1 5-2 7" stroke="#e8e8e8" stroke-width="1" stroke-dasharray="1 1" fill="none"/>
</svg>
<svg style="left:29px;top:346px" width="4" height="4" viewBox="0 0 4 4"><path d="M3.5 0.5V3.5H0.5z" fill="#b8b8b8"/></svg>
<svg style="left:11px;top:357px" width="18" height="16" viewBox="0 0 18 16">
 <path d="M1 9l6-6h10l-6 6z" fill="#dedede"/>
 <path d="M1 9h10v6H1z" fill="#c8c8c8"/>
 <path d="M11 9l6-6v6l-6 6z" fill="#a8a8a8"/>
</svg>
<svg style="left:29px;top:371px" width="4" height="4" viewBox="0 0 4 4"><path d="M3.5 0.5V3.5H0.5z" fill="#b8b8b8"/></svg>
<svg style="left:10px;top:385px" width="18" height="14" viewBox="0 0 18 14">
 <defs><linearGradient id="gg" x1="0" y1="0" x2="1" y2="0.3"><stop offset="0" stop-color="#222"/><stop offset="1" stop-color="#d8d8d8"/></linearGradient></defs>
 <rect x="1" y="1" width="16" height="12" fill="url(#gg)" stroke="#eaeaea" stroke-width="1.3"/>
</svg>
<svg style="left:29px;top:397px" width="4" height="4" viewBox="0 0 4 4"><path d="M3.5 0.5V3.5H0.5z" fill="#b8b8b8"/></svg>
<svg style="left:12px;top:409px" width="14" height="17" viewBox="0 0 14 17">
 <path d="M7 0.5C9 4 12.5 7 12.5 10.5a5.5 5.5 0 0 1-11 0C1.5 7 5 4 7 0.5z" fill="#cfcfcf"/>
</svg>
<svg style="left:29px;top:423px" width="4" height="4" viewBox="0 0 4 4"><path d="M3.5 0.5V3.5H0.5z" fill="#b8b8b8"/></svg>
<svg style="left:11px;top:435px" width="17" height="17" viewBox="0 0 17 17">
 <circle cx="6.5" cy="6.5" r="5.5" fill="#cfcfcf"/>
 <path d="M9.5 9.5L15 15" stroke="#cfcfcf" stroke-width="2.2" stroke-linecap="round"/>
</svg>
<svg style="left:29px;top:450px" width="4" height="4" viewBox="0 0 4 4"><path d="M3.5 0.5V3.5H0.5z" fill="#b8b8b8"/></svg>
<div class="a" style="left:5px;top:459px;width:30px;height:24px;background:#3b3b3b"></div>
<svg style="left:0;top:0" width="1280" height="680" viewBox="0 0 1280 680">
 <use href="#penico" transform="translate(25.2 466.6) rotate(45) scale(0.95)"/>
</svg>
<svg style="left:10px;top:463px" width="19" height="19" viewBox="0 0 19 19">
 <path d="M12.5 1.5l5 5-2 2-5-5z" fill="#d6d6d6" stroke="#222" stroke-width="0.7"/>
 <path d="M10 4l5 5-2 5.5L1.5 17.5 4.5 6z" fill="#d6d6d6" stroke="#333" stroke-width="0.6"/>
 <path d="M1.8 17.2L8 11" stroke="#222" stroke-width="0.9"/>
 <circle cx="8.5" cy="10.5" r="1.1" fill="#222"/>
</svg>
<svg style="left:29px;top:479px" width="4" height="4" viewBox="0 0 4 4"><path d="M3.5 0.5V3.5H0.5z" fill="#b8b8b8"/></svg>
<svg style="left:0;top:0" width="40" height="520" viewBox="0 0 40 520"><path d="M13 491.2h12v3.6h-0.7c-0.3-1.4-0.8-1.9-2-1.9h-2.3v10.6c0 0.6 0.3 0.8 1.5 0.9v0.9h-6.2v-0.9c1.2-0.1 1.5-0.3 1.5-0.9V492.9h-2.3c-1.2 0-1.7 0.5-2 1.9H13z" fill="#dedede"/></svg>
<svg style="left:29px;top:503px" width="4" height="4" viewBox="0 0 4 4"><path d="M3.5 0.5V3.5H0.5z" fill="#b8b8b8"/></svg>
<svg style="left:13px;top:516px" width="13" height="18" viewBox="0 0 13 18">
 <path d="M1.5 1v13.5l3.2-3 2.3 5 2-1-2.2-5h4.7z" fill="#3a3a3a" stroke="#dcdcdc" stroke-width="1.1" stroke-linejoin="miter"/>
</svg>
<svg style="left:29px;top:531px" width="4" height="4" viewBox="0 0 4 4"><path d="M3.5 0.5V3.5H0.5z" fill="#b8b8b8"/></svg>
<svg style="left:11px;top:543px" width="16" height="16" viewBox="0 0 16 16">
 <defs><linearGradient id="rg" x1="0" y1="0" x2="0" y2="1"><stop offset="0" stop-color="#9a9a9a"/><stop offset="1" stop-color="#777"/></linearGradient></defs>
 <rect x="1.5" y="1.5" width="13" height="12" fill="url(#rg)" stroke="#e6e6e6" stroke-width="1.3"/>
</svg>
<svg style="left:29px;top:556px" width="4" height="4" viewBox="0 0 4 4"><path d="M3.5 0.5V3.5H0.5z" fill="#b8b8b8"/></svg>
<div class="a" style="left:5px;top:565px;width:29px;height:1px;background:#3c3c3c;box-shadow:0 1px 0 #5e5e5e"></div>
<svg style="left:0;top:565px" width="40" height="30" viewBox="0 565 40 30">
 <g stroke="#d8d8d8" stroke-width="2.3" stroke-linecap="round">
  <path d="M15.2 573.6L16 580 M19.1 572.6V579 M23 573.6L22.6 580 M26.1 576.4L24.6 582 M11.6 579.6L16 584.5"/>
 </g>
 <path d="M14.6 578h10.6l0.4 4-1.6 5.8h-8L13 583.5z" fill="#d8d8d8"/>
</svg>
<svg style="left:29px;top:587px" width="4" height="4" viewBox="0 0 4 4"><path d="M3.5 0.5V3.5H0.5z" fill="#b8b8b8"/></svg>
<svg style="left:11px;top:597px" width="18" height="18" viewBox="0 0 18 18">
 <circle cx="7" cy="7" r="5.5" fill="#8e8e8e" stroke="#d6d6d6" stroke-width="1.3"/>
 <path d="M11 11l5.5 5.5" stroke="#d6d6d6" stroke-width="2.4" stroke-linecap="round"/>
</svg>
<svg style="left:4px;top:621px" width="11" height="12" viewBox="0 0 11 12">
 <rect x="3.5" y="4.5" width="7" height="7" fill="#d8d8d8" stroke="#222" stroke-width="0.8"/>
 <rect x="0.5" y="0.5" width="6.5" height="6.5" fill="#222" stroke="#d8d8d8" stroke-width="1.1"/>
</svg>
<svg style="left:21px;top:620px" width="12" height="13" viewBox="0 0 12 13">
 <path d="M3 1.5v0M9.5 10V5.5Q9.5 3 7 3H3.5" stroke="#dcdcdc" stroke-width="1.2" fill="none"/>
 <path d="M1 3l3-2.5v5z M9.5 12.5l-2.5-3h5z" fill="#dcdcdc"/>
</svg>
<div class="a" style="left:14px;top:647px;width:20px;height:20px;background:#fff;border:1px solid #2a2a2a"></div>
<div class="a" style="left:5px;top:637px;width:19px;height:20px;background:#000;border:1px solid #2a2a2a;box-shadow:inset 0 0 0 1px #fff"></div>
<div class="a" style="left:10px;top:676px;width:17px;height:10px;border:1.2px solid #e6e6e6;background:#383838;box-shadow:0 -1px 0 #222"></div>
<svg style="left:0;top:670px" width="40" height="10" viewBox="0 670 40 10"><g fill="#eee"><circle cx="17.5" cy="678.5" r="0.8"/><circle cx="19.5" cy="678" r="0.8"/><circle cx="15.5" cy="679.5" r="0.8"/><circle cx="21.5" cy="679.5" r="0.8"/></g></svg>
<!-- RED HIGHLIGHTS + POPUP -->
<div class="a" style="left:1px;top:459px;width:37px;height:28px;border:4px solid #c40000;border-right:none"></div>
<div class="a" style="left:37px;top:460px;width:300px;height:104px;background:#606060;border:4px solid #c40000;border-left-width:5px;box-shadow:1px 0 0 #1a1a1a"></div>
<div class="a" style="left:45px;top:469px;width:4px;height:4px;background:#fff"></div>
<svg style="left:0;top:0" width="1280" height="680" viewBox="0 0 1280 680">
 <use href="#penico" transform="translate(73.4 466.6) rotate(45) scale(0.95)"/>
 <use href="#penico" transform="translate(74.2 484.4) rotate(45) scale(0.95)"/>
 <use href="#penico" transform="translate(75.1 503.8) rotate(45) scale(0.95)"/>
 <use href="#penico" transform="translate(75.1 523) rotate(45) scale(0.95)"/>
</svg>
<svg style="left:0;top:475px" width="80" height="30" viewBox="0 475 80 30"><g fill="#f0f0f0"><circle cx="58.4" cy="484" r="0.85"/><circle cx="60.5" cy="485.5" r="0.85"/><circle cx="61" cy="487.8" r="0.85"/><circle cx="60.3" cy="490" r="0.85"/><circle cx="59.5" cy="492.2" r="0.85"/><circle cx="58.7" cy="494.4" r="0.85"/><circle cx="58.1" cy="496.6" r="0.85"/></g></svg>
<svg style="left:55px;top:500px" width="10" height="10" viewBox="0 0 10 10"><path d="M5 1v8 M1 5h8" stroke="#eee" stroke-width="2.6"/></svg>
<svg style="left:55px;top:521px" width="10" height="5" viewBox="0 0 10 5"><path d="M1 2.5h8" stroke="#eee" stroke-width="2.6"/></svg>
<svg style="left:62px;top:538px" width="12" height="17" viewBox="0 0 12 17"><path d="M1.5 16.5V1.5L11 10" stroke="#e6e6e6" stroke-width="1.2" fill="none"/></svg>
<div class="t" style="left:81px;top:466px;font-size:10px;color:#f4f4f4;letter-spacing:0.16px">Инструмент "Перо"</div>
<div class="t" style="left:81px;top:485px;font-size:10px;color:#f4f4f4;letter-spacing:0.16px">Инструмент "Свободное перо"</div>
<div class="t" style="left:81px;top:504px;font-size:10px;color:#f4f4f4;letter-spacing:0.16px">Инструмент "Перо+" (добавить опорную точку)</div>
<div class="t" style="left:81px;top:523px;font-size:10px;color:#f4f4f4;letter-spacing:0.16px">Инструмент "Перо-" (удалить опорную точку)</div>
<div class="t" style="left:81px;top:542px;font-size:10px;color:#f4f4f4;letter-spacing:0.16px">Инструмент "Угол"</div>
<div class="t" style="left:321px;top:466px;font-size:10px;color:#f4f4f4">P</div>
<div class="t" style="left:321px;top:485px;font-size:10px;color:#f4f4f4">P</div>
<!-- DOCK ICONS -->
<svg style="left:909px;top:89px" width="17" height="19" viewBox="0 0 17 19">
 <rect x="1.5" y="1.5" width="4.5" height="4.5" fill="none" stroke="#d8d8d8" stroke-width="1.2"/>
 <rect x="1.5" y="7.5" width="4.5" height="4.5" fill="none" stroke="#d8d8d8" stroke-width="1.2"/>
 <rect x="1" y="13" width="5.5" height="5.5" fill="#c8c8c8"/>
 <path d="M9 2h4c3 2 3 8-2.5 13" stroke="#d8d8d8" stroke-width="1.6" fill="none"/>
</svg>
<svg style="left:908px;top:130px" width="18" height="18" viewBox="0 0 18 18">
 <path d="M5.5 1L10 3.3v5.4L5.5 11 1 8.7V3.3z" fill="#c8c8c8"/>
 <path d="M1 3.3L5.5 5.6 10 3.3 M5.5 5.6V11" stroke="#777" stroke-width="0.8" fill="none"/>
 <rect x="12.5" y="1" width="4" height="3.5" fill="#d0d0d0"/><rect x="12.5" y="6" width="4" height="4" fill="#d0d0d0"/>
 <rect x="1" y="12.5" width="15.5" height="4.5" fill="#d0d0d0"/>
 <path d="M12 14l1.5 2 1.5-2z" fill="#333"/>
</svg>
<svg style="left:906px;top:170px" width="22" height="21" viewBox="0 0 22 21">
 <g stroke="#dcdcdc" stroke-width="1.1" fill="none">
 <path d="M1 1.5h7l5 7 M1 1.5l3.5 5.5v5 M4.5 12h3.5 L1 1.5"/>
 <path d="M8 1.5l5 7v11h7.5l-2-6.5V8h-5.5"/>
 <path d="M15 10.5l3 4.5"/>
 </g>
</svg>
<svg style="left:907px;top:212px" width="18" height="20" viewBox="0 0 18 20">
 <rect x="4" y="11" width="10" height="8.5" fill="#d0d0d0"/>
 <path d="M6 11L2.5 5.5 M8.5 11V2 M11.5 11L15 6" stroke="#d0d0d0" stroke-width="1.2"/>
 <ellipse cx="2.8" cy="4.5" rx="2" ry="3.2" fill="#c8c8c8" transform="rotate(-25 2.8 4.5)"/>
 <ellipse cx="8.5" cy="2.5" rx="1.5" ry="2.3" fill="#c8c8c8"/>
 <ellipse cx="14.5" cy="5" rx="2.3" ry="2.8" fill="#c8c8c8" transform="rotate(30 14.5 5)"/>
</svg>
<svg style="left:906px;top:240px" width="21" height="19" viewBox="0 0 21 19">
 <path d="M1 4c2-3 5-4 8-2.5 0 2-3 3.5-8 2.5z" fill="#d0d0d0"/>
 <rect x="8" y="3" width="12" height="1.8" fill="#d0d0d0"/>
 <rect x="1" y="12" width="12" height="1.8" fill="#d0d0d0"/>
 <path d="M12 13l7-5c1.5 3 1.5 7 0 10z" fill="#d0d0d0"/>
</svg>
</body></html>
